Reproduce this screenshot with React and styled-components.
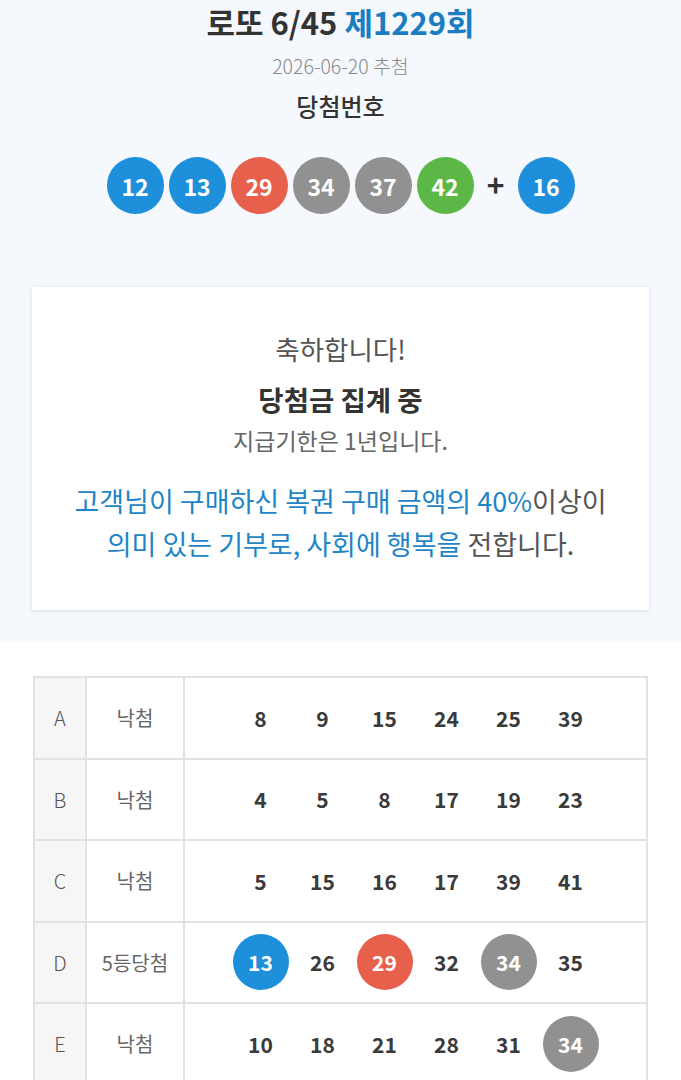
import React from 'react';
import styled, { createGlobalStyle } from 'styled-components';

const GlobalStyle = createGlobalStyle`
  html, body {
    margin: 0;
    padding: 0;
    background: #ffffff;
    font-family: 'Noto Sans CJK KR', 'Noto Sans', sans-serif;
  }
`;

const colors = {
  blue: '#1e8fda',
  red: '#e7604c',
  gray: '#919191',
  green: '#5bb846',
};

const winning = [
  { n: 12, c: 'blue' },
  { n: 13, c: 'blue' },
  { n: 29, c: 'red' },
  { n: 34, c: 'gray' },
  { n: 37, c: 'gray' },
  { n: 42, c: 'green' },
];
const bonus = { n: 16, c: 'blue' };

const games = [
  { label: 'A', result: '낙첨', nums: [8, 9, 15, 24, 25, 39] },
  { label: 'B', result: '낙첨', nums: [4, 5, 8, 17, 19, 23] },
  { label: 'C', result: '낙첨', nums: [5, 15, 16, 17, 39, 41] },
  {
    label: 'D',
    result: '5등당첨',
    nums: [13, 26, 29, 32, 34, 35],
    hits: { 13: 'blue', 29: 'red', 34: 'gray' },
  },
  { label: 'E', result: '낙첨', nums: [10, 18, 21, 28, 31, 34], hits: { 34: 'gray' } },
];

const App = () => (
  <>
    <GlobalStyle />
    <Top>
      <Title>
        로또 6/45 <Round>제1229회</Round>
      </Title>
      <DrawDate>2026-06-20 추첨</DrawDate>
      <SubTitle>당첨번호</SubTitle>

      <Balls>
        {winning.map((b) => (
          <Ball key={b.n} color={colors[b.c]}>
            {b.n}
          </Ball>
        ))}
        <Plus>+</Plus>
        <Ball color={colors[bonus.c]}>{bonus.n}</Ball>
      </Balls>

      <Card>
        <Congrats>축하합니다!</Congrats>
        <Prize>당첨금 집계 중</Prize>
        <Deadline>지급기한은 1년입니다.</Deadline>
        <Donation>
          <Blue>고객님이 구매하신 복권 구매 금액의 40%</Blue>이상이
          <br />
          <Blue>의미 있는 기부로, 사회에 행복을</Blue> 전합니다.
        </Donation>
      </Card>
    </Top>

    <Table>
      {games.map((g) => (
        <Row key={g.label}>
          <LabelCell>{g.label}</LabelCell>
          <ResultCell>{g.result}</ResultCell>
          <NumbersCell>
            {g.nums.map((n, i) => {
              const hit = g.hits && g.hits[n];
              return hit ? (
                <SmallBall key={i} color={colors[hit]}>
                  {n}
                </SmallBall>
              ) : (
                <Num key={i}>{n}</Num>
              );
            })}
          </NumbersCell>
        </Row>
      ))}
    </Table>
  </>
);

export default App;

const Top = styled.section`
  background: #f5f8fc;
  padding: 4px 32px 32px;
  display: flex;
  flex-direction: column;
  align-items: center;
`;

const Title = styled.h1`
  margin: 0;
  font-size: 31px;
  line-height: 36px;
  font-weight: 700;
  color: #333333;
`;

const Round = styled.span`
  color: #1a7dc2;
`;

const DrawDate = styled.div`
  margin-top: 13px;
  font-size: 19.5px;
  line-height: 26px;
  font-weight: 300;
  color: #8a8a8a;
`;

const SubTitle = styled.h2`
  margin: 12px 0 0;
  font-size: 24px;
  line-height: 30px;
  font-weight: 500;
  color: #333333;
`;

const Balls = styled.div`
  margin-top: 36px;
  display: flex;
  align-items: center;
  gap: 5px;
`;

const Ball = styled.div`
  width: 57px;
  height: 57px;
  border-radius: 50%;
  background: ${(p) => p.color};
  color: #ffffff;
  display: flex;
  align-items: center;
  justify-content: center;
  font-size: 23px;
  font-weight: 700;
`;

const Plus = styled.div`
  width: 34px;
  text-align: center;
  font-size: 30px;
  line-height: 1;
  font-weight: 700;
  color: #333333;
  padding-bottom: 4px;
`;

const Card = styled.div`
  margin-top: 73px;
  align-self: stretch;
  background: #ffffff;
  box-shadow: 0 1px 4px rgba(0, 0, 0, 0.12);
  padding: 46px 16px 45px;
  display: flex;
  flex-direction: column;
  align-items: center;
  text-align: center;
`;

const Congrats = styled.div`
  font-size: 26.5px;
  line-height: 32px;
  font-weight: 400;
  color: #555555;
`;

const Prize = styled.div`
  margin-top: 17px;
  font-size: 27.5px;
  line-height: 34px;
  font-weight: 700;
  color: #333333;
`;

const Deadline = styled.div`
  margin-top: 10px;
  font-size: 23px;
  line-height: 28px;
  font-weight: 400;
  color: #666666;
`;

const Donation = styled.p`
  margin: 25px 0 0;
  font-size: 27px;
  line-height: 43px;
  font-weight: 400;
  color: #555555;
`;

const Blue = styled.span`
  color: #1f85c6;
`;

const Table = styled.div`
  margin: 34px 33px 0;
  border-top: 2px solid #e2e2e2;
  border-left: 2px solid #e2e2e2;
`;

const Row = styled.div`
  display: grid;
  grid-template-columns: 52px 98px 1fr;
  height: 81.5px;
`;

const Cell = styled.div`
  border-right: 2px solid #e2e2e2;
  border-bottom: 2px solid #e2e2e2;
  display: flex;
  align-items: center;
  justify-content: center;
`;

const LabelCell = styled(Cell)`
  background: #f6f6f6;
  font-size: 20px;
  font-weight: 300;
  color: #555555;
`;

const ResultCell = styled(Cell)`
  font-size: 20px;
  font-weight: 400;
  color: #666666;
`;

const NumbersCell = styled(Cell)`
  gap: 6px;
`;

const Num = styled.div`
  width: 56px;
  text-align: center;
  font-size: 21px;
  font-weight: 700;
  color: #3a3a3a;
`;

const SmallBall = styled.div`
  width: 56px;
  height: 56px;
  border-radius: 50%;
  background: ${(p) => p.color};
  color: #ffffff;
  display: flex;
  align-items: center;
  justify-content: center;
  font-size: 21px;
  font-weight: 700;
`;
